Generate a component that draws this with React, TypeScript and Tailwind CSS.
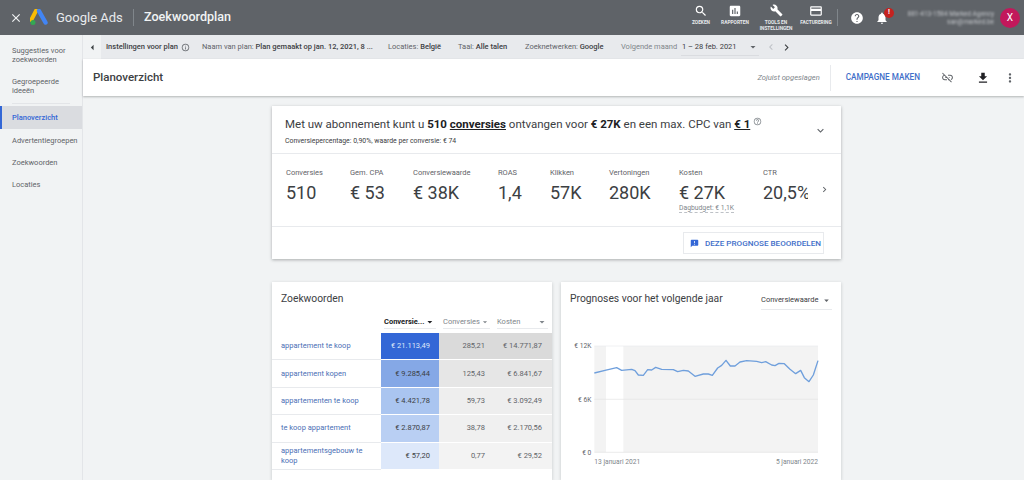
import {
  MdAnnouncement,
  MdArrowDropDown,
  MdArrowLeft,
  MdAssessment,
  MdBuild,
  MdChevronLeft,
  MdChevronRight,
  MdClose,
  MdCreditCard,
  MdExpandMore,
  MdFileDownload,
  MdHelp,
  MdHelpOutline,
  MdInfoOutline,
  MdLinkOff,
  MdMoreVert,
  MdNotifications,
  MdSearch,
} from "react-icons/md";

const navItems = [
  { label: "Suggesties voor zoekwoorden", h: "h-[31px]" },
  { label: "Gegroepeerde ideeën", h: "h-[26px]" },
];
const navItems2 = ["Advertentiegroepen", "Zoekwoorden", "Locaties"];

const filters = [
  { label: "Naam van plan:", value: "Plan gemaakt op jan. 12, 2021, 8 ...", w: "w-[186px]" },
  { label: "Locaties:", value: "België", w: "w-[70px]" },
  { label: "Taal:", value: "Alle talen", w: "w-[67px]" },
  { label: "Zoeknetwerken:", value: "Google", w: "w-[96px]" },
];

const metrics = [
  { label: "Conversies", value: "510", w: "w-[64px]" },
  { label: "Gem. CPA", value: "€ 53", w: "w-[63px]" },
  { label: "Conversiewaarde", value: "€ 38K", w: "w-[85px]" },
  { label: "ROAS", value: "1,4", w: "w-[52px]" },
  { label: "Klikken", value: "57K", w: "w-[59px]" },
  { label: "Vertoningen", value: "280K", w: "w-[70px]" },
  { label: "Kosten", value: "€ 27K", w: "w-[84px]", sub: "Dagbudget: € 1,1K" },
  { label: "CTR", value: "20,5%", w: "w-[45px]" },
];

const rows = [
  { kw: "appartement te koop", a: "€ 21.113,49", b: "285,21", c: "€ 14.771,87", ac: "bg-[#3367d6] text-[#dfe7f8]", bc: "bg-[#dadada]", cc: "bg-[#dadada]" },
  { kw: "appartement kopen", a: "€ 9.285,44", b: "125,43", c: "€ 6.841,67", ac: "bg-[#85a8e6] text-[#3c4043]", bc: "bg-[#e6e6e6]", cc: "bg-[#e6e6e6]" },
  { kw: "appartementen te koop", a: "€ 4.421,78", b: "59,73", c: "€ 3.092,49", ac: "bg-[#aac5f0] text-[#3c4043]", bc: "bg-[#eeeeee]", cc: "bg-[#eeeeee]" },
  { kw: "te koop appartement", a: "€ 2.870,87", b: "38,78", c: "€ 2.170,56", ac: "bg-[#b9cff3] text-[#3c4043]", bc: "bg-[#f0f0f0]", cc: "bg-[#f0f0f0]" },
  { kw: "appartementsgebouw te koop", a: "€ 57,20", b: "0,77", c: "€ 29,52", ac: "bg-[#dde8fa] text-[#3c4043]", bc: "bg-[#f3f3f3]", cc: "bg-[#f3f3f3]" },
];

const linePoints =
  "118,294 150,286 185,278 200,286 230,283 240,287 250,300 265,301 278,284 290,285 302,277 320,283 355,284 368,290 385,286 400,288 420,304 445,297 460,297 472,301 488,279 500,271 513,256 526,273 540,273 555,261 575,257 605,259 620,263 632,260 650,270 660,272 672,265 688,266 705,283 722,296 737,286 748,308 762,320 775,300 789,257";

function HeaderItem({ icon, label }: { icon: React.ReactNode; label: React.ReactNode }) {
  return (
    <div className="flex w-full flex-col items-center">
      <div className="flex h-[14px] items-center">{icon}</div>
      <div className="mt-[2px] text-center text-[4.8px] leading-[6px] font-bold text-[#e8eaed] uppercase">
        {label}
      </div>
    </div>
  );
}

function Header() {
  return (
    <header className="flex h-[35px] shrink-0 items-center bg-[#5f6368] text-white">
      <MdClose className="ml-[9px] h-[14px] w-[14px] text-[#f1f3f4]" />
      <svg viewBox="0 0 18 16" className="ml-[7px] h-[17px] w-[18px]">
        <path d="M6.2 1 L1.2 10.5" stroke="#fbbc04" strokeWidth="4" strokeLinecap="round" />
        <path d="M9 1.5 L15.5 13" stroke="#4285f4" strokeWidth="4.4" strokeLinecap="round" />
        <circle cx="3" cy="13" r="2.5" fill="#34a853" />
      </svg>
      <div className="ml-[8px] w-[65px] text-[13px] whitespace-nowrap text-[#e8eaed]">Google Ads</div>
      <div className="ml-[12px] h-[17px] w-px bg-[#80868b]" />
      <div className="ml-[10px] text-[12.6px] font-medium text-[#f1f3f4]">Zoekwoordplan</div>
      <div className="ml-auto flex items-center">
        <div className="grid w-[148px] grid-cols-[34px_34px_48px_32px] items-start">
          <HeaderItem icon={<MdSearch className="h-[14px] w-[14px]" />} label="Zoeken" />
          <HeaderItem icon={<MdAssessment className="h-[14px] w-[14px]" />} label="Rapporten" />
          <HeaderItem
            icon={<MdBuild className="h-[13px] w-[13px]" />}
            label={
              <>
                Tools en
                <br />
                instellingen
              </>
            }
          />
          <HeaderItem icon={<MdCreditCard className="h-[14px] w-[14px]" />} label="Facturering" />
        </div>
        <div className="ml-[5px] h-[17px] w-px bg-[#80868b]" />
        <MdHelp className="ml-[12px] h-[14px] w-[14px]" />
        <div className="relative ml-[11px]">
          <MdNotifications className="h-[14px] w-[14px]" />
          <div className="absolute -top-[3px] left-[9px] flex h-[10px] w-[10px] items-center justify-center rounded-full bg-[#c5221f] text-[7px] font-bold">
            !
          </div>
        </div>
        <div className="ml-[9px] w-[96px] text-right text-[6.5px] leading-[8px] text-[#c4c7cb] blur-[1px]">
          <div>881-413-1584 Marked Agency</div>
          <div>san@marked.be</div>
        </div>
        <div className="mr-[4px] ml-[6px] flex h-[20px] w-[20px] items-center justify-center rounded-full bg-[#c2185b] text-[10px]">
          X
        </div>
      </div>
    </header>
  );
}

function Sidebar() {
  return (
    <aside className="w-[83px] shrink-0 border-r border-[#e3e5e8] bg-[#f1f3f4] text-[7.5px] leading-[9px] text-[#5f6368]">
      <div className="pt-[11px]">
        {navItems.map((item) => (
          <div key={item.label} className={`${item.h} pr-[4px] pl-[12px]`}>
            {item.label}
          </div>
        ))}
      </div>
      <div className="mx-[12px] h-px bg-[#e3e5e8]" />
      <div className="mt-[2px] flex h-[23px] items-center border-l-[2px] border-[#3367d6] bg-[#dadce0] pl-[10px] font-medium text-[#3367d6]">
        Planoverzicht
      </div>
      {navItems2.map((item) => (
        <div key={item} className="flex h-[22px] items-center pl-[12px]">
          {item}
        </div>
      ))}
    </aside>
  );
}

function FilterBar() {
  return (
    <div className="flex h-[24px] shrink-0 items-center bg-[#e8eaed] text-[7.5px] whitespace-nowrap text-[#5f6368]">
      <div className="flex h-full w-[18px] items-center justify-center bg-[#f1f3f4]">
        <MdArrowLeft className="h-[13px] w-[13px] text-[#3c4043]" />
      </div>
      <div className="ml-[5px] flex w-[96px] items-center font-medium text-[#3c4043]">
        Instellingen voor plan
        <MdInfoOutline className="ml-[3px] h-[9px] w-[9px] text-[#5f6368]" />
      </div>
      {filters.map((f) => (
        <div key={f.label} className={f.w}>
          {f.label} <span className="font-medium text-[#3c4043]">{f.value}</span>
        </div>
      ))}
      <div className="w-[60px] text-[#80868b]">Volgende maand</div>
      <div className="flex h-[17px] w-[78px] items-center justify-between border-b border-[#dadce0] pl-[1px] text-[#3c4043]">
        1 – 28 feb. 2021
        <MdArrowDropDown className="h-[12px] w-[12px] text-[#5f6368]" />
      </div>
      <MdChevronLeft className="ml-[6px] h-[12px] w-[12px] text-[#bdc1c6]" />
      <MdChevronRight className="ml-[3px] h-[13px] w-[13px] text-[#3c4043]" />
    </div>
  );
}

function PlanHeader() {
  return (
    <div className="flex h-[37px] shrink-0 items-center bg-white pl-[10px] shadow-[0_1px_2px_rgba(60,64,67,0.35)]">
      <div className="text-[11.5px] font-medium text-[#3c4043]">Planoverzicht</div>
      <div className="ml-auto text-[7.6px] text-[#80868b] italic">Zojuist opgeslagen</div>
      <div className="ml-[10px] h-[26px] w-px bg-[#e8eaed]" />
      <div className="ml-[15px] text-[8.2px] font-medium text-[#3f6fc9]">CAMPAGNE MAKEN</div>
      <MdLinkOff className="ml-[21px] h-[13px] w-[13px] text-[#5f6368]" />
      <MdFileDownload className="ml-[22px] h-[14px] w-[14px] text-[#202124]" />
      <MdMoreVert className="mr-[7px] ml-[13px] h-[14px] w-[14px] text-[#5f6368]" />
    </div>
  );
}

function ForecastCard() {
  return (
    <section className="h-[153px] w-[569px] bg-white shadow-[0_1px_3px_rgba(60,64,67,0.4)]">
      <div className="relative h-[48px] border-b border-[#e8eaed] pt-[11px] pl-[13px]">
        <div className="flex items-start whitespace-nowrap text-[11.5px] leading-[15px] text-[#3c4043]">
          <span>
            Met uw abonnement kunt u <b className="font-bold text-[#202124]">510</b>{" "}
            <b className="font-bold text-[#202124] underline">conversies</b> ontvangen voor{" "}
            <b className="font-bold text-[#202124]">€ 27K</b> en een max. CPC van{" "}
            <b className="font-bold text-[#202124] underline">€ 1</b>
          </span>
          <MdHelpOutline className="ml-[3px] h-[9px] w-[9px] text-[#80868b]" />
        </div>
        <div className="mt-[5px] text-[6.9px] leading-[9px] text-[#3c4043]">
          Conversiepercentage: 0,90%, waarde per conversie: € 74
        </div>
        <MdExpandMore className="absolute top-[18px] right-[14px] h-[13px] w-[13px] text-[#5f6368]" />
      </div>
      <div className="relative flex h-[73px] overflow-hidden border-b border-[#e8eaed] pt-[14px] pl-[14px]">
        {metrics.map((m) => (
          <div key={m.label} className={`${m.w} shrink-0 whitespace-nowrap`}>
            <div className="text-[7.5px] leading-[10px] text-[#5f6368]">{m.label}</div>
            <div className="mt-[3px] text-[18px] leading-[23px] text-[#3c4043]">{m.value}</div>
            {m.sub && (
              <div className="w-fit border-b border-dashed border-[#bdc1c6] text-[6.8px] leading-[8px] text-[#80868b]">
                {m.sub}
              </div>
            )}
          </div>
        ))}
        <div className="absolute top-0 right-0 flex h-full w-[33px] justify-center bg-white pt-[30px]">
          <MdChevronRight className="h-[11px] w-[11px] text-[#5f6368]" />
        </div>
      </div>
      <div className="flex h-[32px] items-center justify-end pr-[17px]">
        <div className="flex h-[22px] w-[141px] items-center border border-[#e8eaed] pl-[6px] text-[8.1px] font-medium whitespace-nowrap text-[#3f6fc9]">
          <MdAnnouncement className="mr-[6px] h-[9px] w-[9px] text-[#3367d6]" />
          DEZE PROGNOSE BEOORDELEN
        </div>
      </div>
    </section>
  );
}

function SortHead({ label, w, active }: { label: string; w: string; active?: boolean }) {
  return (
    <div
      className={`flex ${w} h-[14px] items-center justify-between border-b border-[#e8eaed] text-[7.5px] ${
        active ? "font-bold text-[#202124]" : "text-[#80868b]"
      }`}
    >
      {label}
      <MdArrowDropDown className={`h-[12px] w-[12px] ${active ? "text-[#202124]" : "text-[#80868b]"}`} />
    </div>
  );
}

function KeywordsCard() {
  return (
    <section className="h-[198px] w-[280px] bg-white shadow-[0_1px_3px_rgba(60,64,67,0.25)]">
      <div className="h-[33px] pt-[10px] pl-[9px] text-[10.3px] leading-[14px] text-[#3c4043]">Zoekwoorden</div>
      <div className="flex h-[18px] items-start gap-[7px] pl-[112px]">
        <SortHead label="Conversie..." w="w-[52px]" active />
        <SortHead label="Conversies" w="w-[47px]" />
        <SortHead label="Kosten" w="w-[51px]" />
      </div>
      {rows.map((r) => (
        <div
          key={r.kw}
          className="grid h-[27.4px] grid-cols-[109px_58px_56px_57px] text-[7.5px] leading-[10px] text-[#5f6368]"
        >
          <div className="flex items-center border-b border-[#e8eaed] pr-[6px] pl-[9px] text-[#4a6fb5]">{r.kw}</div>
          <div className={`flex items-center justify-end border-b border-white pr-[9px] ${r.ac}`}>{r.a}</div>
          <div className={`flex items-center justify-end border-b border-white pr-[10px] ${r.bc}`}>{r.b}</div>
          <div className={`flex items-center justify-end border-b border-white pr-[10px] ${r.cc}`}>{r.c}</div>
        </div>
      ))}
    </section>
  );
}

function PrognosisCard() {
  return (
    <section className="h-[198px] w-[280px] bg-white shadow-[0_1px_3px_rgba(60,64,67,0.25)]">
      <div className="flex h-[28px] items-start">
        <div className="pt-[10px] pl-[9px] text-[10.3px] leading-[14px] whitespace-nowrap text-[#3c4043]">
          Prognoses voor het volgende jaar
        </div>
        <div className="mt-[9px] mr-[9px] ml-auto flex h-[19px] w-[71px] items-center justify-between border-b border-[#e8eaed] text-[7.5px] text-[#3c4043]">
          Conversiewaarde
          <MdArrowDropDown className="h-[11px] w-[11px] text-[#5f6368]" />
        </div>
      </div>
      {/* coords follow the 3x crop of the chart */}
      <svg viewBox="18 111 840 495" className="mt-[2px] h-[165px] w-[280px]">
        <rect x="118" y="213" width="671" height="319" fill="#f3f3f3" />
        <rect x="153" y="213" width="52" height="319" fill="#ffffff" />
        <line x1="118" y1="213" x2="789" y2="213" stroke="#e8eaed" strokeWidth="2" />
        <line x1="118" y1="373" x2="789" y2="373" stroke="#e4e4e4" strokeWidth="2" />
        <line x1="118" y1="532" x2="789" y2="532" stroke="#e4e4e4" strokeWidth="2" />
        <polyline points={linePoints} fill="none" stroke="#6f9fdc" strokeWidth="4" strokeLinejoin="round" />
        <g fontSize="20" fill="#5f6368" textAnchor="end" fontFamily="Roboto, sans-serif">
          <text x="109" y="220">€ 12K</text>
          <text x="109" y="380">€ 6K</text>
          <text x="109" y="539">€ 0</text>
        </g>
        <g fontSize="20" fill="#80868b" fontFamily="Roboto, sans-serif">
          <text x="118" y="566">13 januari 2021</text>
          <text x="789" y="566" textAnchor="end">5 januari 2022</text>
        </g>
      </svg>
    </section>
  );
}

export default function App() {
  return (
    <div className="flex h-[480px] w-[1024px] flex-col overflow-hidden bg-[#f1f3f4] font-['Roboto',sans-serif]">
      <Header />
      <div className="flex min-h-0 flex-1">
        <Sidebar />
        <main className="flex min-w-0 flex-1 flex-col">
          <FilterBar />
          <PlanHeader />
          <div className="flex flex-col items-start pt-[10px] pl-[189px]">
            <ForecastCard />
            <div className="mt-[23px] flex gap-[9px]">
              <KeywordsCard />
              <PrognosisCard />
            </div>
          </div>
        </main>
      </div>
    </div>
  );
}
